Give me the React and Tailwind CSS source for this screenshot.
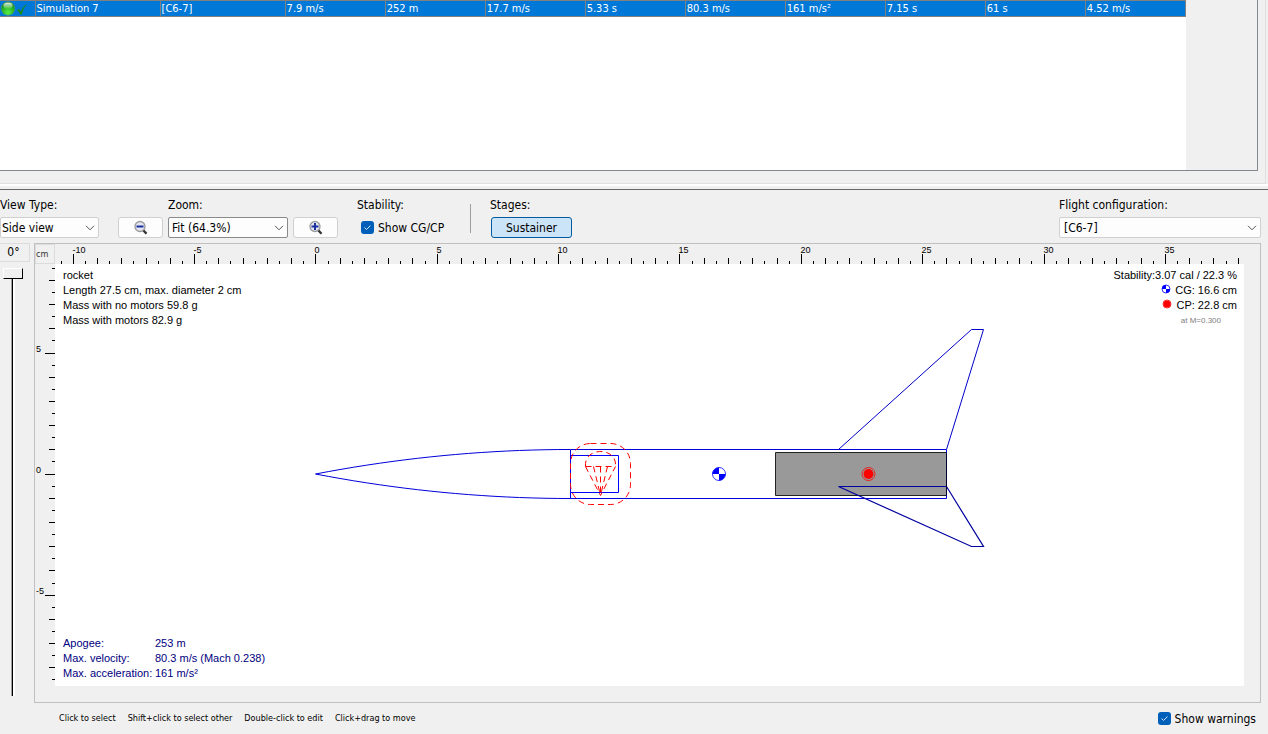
const SIM_CELLS = ['7.9 m/s', '252 m', '17.7 m/s', '5.33 s', '80.3 m/s', '161 m/s²', '7.15 s', '61 s', '4.52 m/s']

const HINTS = ['Click to select', 'Shift+click to select other', 'Double-click to edit', 'Click+drag to move']

// half-centimetre steps on the rulers
const H_STEP = 12.135
const V_STEP = 12.11
const H_TICKS = Array.from({ length: 98 }, (_, k) => k - 21)
const V_TICKS = Array.from({ length: 35 }, (_, k) => k - 17)

const tickLength = i => (i % 10 === 0 ? 10 : i % 2 === 0 ? 6 : 3)

// nose cone profile, sampled from tip to shoulder
const NOSE = Array.from({ length: 21 }, (_, k) => {
  const t = k / 20
  return { x: t * 255, r: 24.5 * (1 - (1 - t) ** 2) }
})
const nosePath = side => 'M' + NOSE.map(p => `${p.x} ${-0.5 + side * p.r}`).join('L')

function SimulationTable() {
  return (
    <div className="pr-0.5">
      <div className="border-r border-b border-[#e0e0e0] pr-[7px] pb-3">
        <div className="h-[171px] overflow-hidden border-r border-b border-[#828790] bg-[#f0f0f0]">
          <div className="h-full w-[1186px] bg-white">
            <table className="w-full table-fixed border-collapse text-[11px] leading-[15px] text-white">
              <tbody>
                <tr className="bg-[#0078d7]">
                  <td className="h-4 w-[35px] border border-l-0 border-[#808080] p-0">
                    <StatusIcons />
                  </td>
                  <td className="w-[125px] border border-[#808080] p-0 pl-px">Simulation 7</td>
                  <td className="w-[125px] border border-[#808080] p-0 pl-px">[C6-7]</td>
                  {SIM_CELLS.map(cell => (
                    <td key={cell} className="w-[100px] border border-[#808080] p-0 pl-px">
                      {cell}
                    </td>
                  ))}
                </tr>
              </tbody>
            </table>
          </div>
        </div>
      </div>
    </div>
  )
}

function StatusIcons() {
  return (
    <svg width="30" height="15" viewBox="0 0 30 15" className="block">
      <defs>
        <radialGradient id="ball" cx="0.5" cy="0.8" r="0.8">
          <stop offset="0" stopColor="#5bf04a" />
          <stop offset="0.6" stopColor="#22b022" />
          <stop offset="1" stopColor="#0a6a14" />
        </radialGradient>
        <linearGradient id="shine" x2="0" y2="1">
          <stop offset="0" stopColor="#fff" stopOpacity="0.9" />
          <stop offset="1" stopColor="#fff" stopOpacity="0.1" />
        </linearGradient>
      </defs>
      <circle cx="8" cy="7.5" r="6.8" fill="url(#ball)" stroke="#5a9a70" strokeWidth="0.6" />
      <ellipse cx="8" cy="4.6" rx="4.6" ry="3.2" fill="url(#shine)" />
      <path d="M17 9l2.200-1 1.600 2.600c1.200-3 3-5.600 6.200-7.600-2.600 3-4.200 6.400-5.200 10.600h-1.600c-.8-1.900-1.700-3.300-3.200-4.600z" fill="#1a8a1a" />
    </svg>
  )
}

function Magnifier({ plus }) {
  return (
    <svg width="16" height="16" viewBox="0 0 16 16">
      <circle cx="7" cy="6.5" r="5" fill="#e4e6f2" stroke="#9a9a9a" strokeWidth="1.3" />
      <path d="M10.500 10.500l3 3.200" stroke="#333" strokeWidth="2.400" />
      <path d="M3.500 6.500h7" stroke="#1a2fa0" strokeWidth="2" />
      {plus && <path d="M7 3v7" stroke="#1a2fa0" strokeWidth="2" />}
    </svg>
  )
}

function Dropdown({ id, value, width, border = 'border-[#d0d0d0]', pad = 'pl-[3px]' }) {
  return (
    <div className={`relative ${width}`}>
      <select
        id={id}
        defaultValue={value}
        className={`block h-[21px] w-full appearance-none rounded-[2px] border bg-[#fdfdfd] text-[12px] leading-[18px] ${border} ${pad}`}
      >
        <option>{value}</option>
      </select>
      <svg width="10" height="6" viewBox="0 0 10 6" className="pointer-events-none absolute top-2 right-1">
        <path d="M1 .8l4 4 4-4" fill="none" stroke="#555" />
      </svg>
    </div>
  )
}

function Check({ id, label }) {
  return (
    <label htmlFor={id} className="flex items-center gap-1">
      <span className="relative block size-[13px]">
        <input id={id} type="checkbox" defaultChecked className="block size-[13px] appearance-none rounded-[3px] bg-[#005fb8]" />
        <svg width="13" height="13" viewBox="0 0 13 13" className="pointer-events-none absolute inset-0">
          <path d="M3.500 6.500l2 2 4-4" fill="none" stroke="#d6e6f5" />
        </svg>
      </span>
      {label}
    </label>
  )
}

const ICON_BUTTON = 'flex h-[21px] w-[45px] items-center justify-center rounded-[3px] border border-[#d0d0d0] bg-[#fdfdfd]'

function Toolbar() {
  return (
    <div className="flex h-[54px] items-start border-t border-[#696969] pt-[7px] pr-[7px] text-[12px] leading-4">
      <div className="flex w-[99px] flex-col gap-1">
        <label htmlFor="view">View Type:</label>
        <Dropdown id="view" value="Side view" width="w-[99px]" pad="pl-px" />
      </div>
      <button aria-label="Zoom out" className={`${ICON_BUTTON} mt-5 ml-[19px]`}>
        <Magnifier />
      </button>
      <div className="ml-[5px] flex flex-col gap-1">
        <label htmlFor="zoom">Zoom:</label>
        <Dropdown id="zoom" value="Fit (64.3%)" width="w-[120px]" border="border-[#8a8a8a]" />
      </div>
      <button aria-label="Zoom in" className={`${ICON_BUTTON} mt-5 ml-[5px]`}>
        <Magnifier plus />
      </button>
      <div className="ml-[19px] flex w-[113px] flex-col gap-1">
        <span>Stability:</span>
        <div className="flex h-[21px] items-center pl-1">
          <Check id="cgcp" label="Show CG/CP" />
        </div>
      </div>
      <div className="mt-[7px] h-[29px] w-px bg-[#a0a0a0]" />
      <div className="ml-[19px] flex flex-col gap-1">
        <span>Stages:</span>
        <button className="ml-px h-[21px] w-[81px] rounded-[3px] border border-[#005a9e] bg-[#cce4f7]">Sustainer</button>
      </div>
      <div className="ml-auto flex flex-col gap-1">
        <label htmlFor="config">Flight configuration:</label>
        <Dropdown id="config" value="[C6-7]" width="w-[202px]" pad="pl-1" />
      </div>
    </div>
  )
}

function RotationSlider() {
  return (
    <div className="flex w-[30px] flex-col">
      <label htmlFor="rotation" className="h-[19px] border border-l-0 border-[#dcdcdc] pr-0.5 text-center text-[12px] leading-[17px]">
        0°
      </label>
      <input
        id="rotation"
        type="range"
        min="0"
        max="360"
        defaultValue="0"
        className="mt-[6px] mb-[7px] ml-[3px] w-5 flex-1 appearance-none bg-transparent [writing-mode:vertical-lr] [&::-webkit-slider-runnable-track]:h-full [&::-webkit-slider-runnable-track]:w-1 [&::-webkit-slider-runnable-track]:border-r-2 [&::-webkit-slider-runnable-track]:border-l [&::-webkit-slider-runnable-track]:border-r-white [&::-webkit-slider-runnable-track]:border-l-[#a0a0a0] [&::-webkit-slider-runnable-track]:bg-black [&::-webkit-slider-thumb]:-ml-[9px] [&::-webkit-slider-thumb]:h-[11px] [&::-webkit-slider-thumb]:w-5 [&::-webkit-slider-thumb]:appearance-none [&::-webkit-slider-thumb]:border [&::-webkit-slider-thumb]:border-t-white [&::-webkit-slider-thumb]:border-r-black [&::-webkit-slider-thumb]:border-b-black [&::-webkit-slider-thumb]:border-l-white [&::-webkit-slider-thumb]:bg-[#f0f0f0]"
      />
    </div>
  )
}

function HorizontalRuler() {
  return (
    <svg className="h-5 w-full overflow-hidden font-['Liberation_Sans',sans-serif] text-[9px]">
      {H_TICKS.map(i => {
        const x = Math.floor(260.9 + i * H_STEP) + 0.5
        return (
          <g key={i}>
            <path d={`M${x} 20v${-tickLength(i)}`} stroke="#000" />
            {i % 10 === 0 && <text x={x - 1} y="9">{i / 2}</text>}
          </g>
        )
      })}
    </svg>
  )
}

function VerticalRuler() {
  return (
    <svg className="h-auto w-5 overflow-hidden font-['Liberation_Sans',sans-serif] text-[9px]">
      {V_TICKS.map(i => {
        const y = Math.floor(210.1 - i * V_STEP) + 0.5
        return (
          <g key={i}>
            <path d={`M20 ${y}h${-tickLength(i)}`} stroke="#000" />
            {i % 10 === 0 && <text x="1" y={y - 2}>{i / 2}</text>}
          </g>
        )
      })}
    </svg>
  )
}

function CgMark({ r }) {
  return (
    <g stroke="none">
      <circle r={r} fill="#fff" stroke="#00f" strokeWidth="0.8" />
      <path d={`M0 0H${-r}A${r} ${r} 0 0 1 0 ${-r}zM0 0H${r}A${r} ${r} 0 0 1 0 ${r}z`} fill="#00f" />
    </g>
  )
}

function CpMark({ r, dot }) {
  return (
    <g>
      <circle r={r} fill="none" stroke="#f00" strokeWidth="0.8" />
      <circle r={dot} fill="#f00" stroke="none" />
    </g>
  )
}

function Rocket() {
  return (
    <svg className="absolute inset-0 size-full">
      <g transform="translate(260.5 210.5)" fill="none" stroke="#00f">
        <path d="M460 -22H631V21H460z" fill="#999" stroke="#222" />
        <path d={nosePath(1)} stroke="#0000dc" />
        <path d={nosePath(-1)} stroke="#0000dc" />
        <path d="M255 -25H631V24H255z" stroke="#0000dc" />
        <path d="M255 -19H303V18H255z" />
        <path d="M523 -25L656 -145H668L631 -25" stroke="#0000c8" />
        <path d="M523 12H631L668 72H656z" stroke="#0000a0" strokeWidth="1.2" />
        <path d="M631 -22V21" stroke="#000030" />
        <g stroke="#f00" strokeDasharray="6 4">
          <rect x="255" y="-31" width="60" height="61" rx="20" />
          <path d="M270 -8H300" />
          <path d="M270 -8C268 -28 302 -28 300 -8" />
          <path d="M270 -8L285 21L300 -8" />
          <path d="M278 -8L285 21M285 -8V21M292 -8L285 21" />
        </g>
        <g transform="translate(403.500 -.5)">
          <CgMark r={6.5} />
        </g>
        <g transform="translate(553 -.5)">
          <CpMark r={6.5} dot={5} />
        </g>
      </g>
    </svg>
  )
}

function DesignCanvas() {
  return (
    <div className="relative flex flex-1 flex-col justify-between bg-white pt-1 pr-[7px] pb-[5px] pl-2 font-['Liberation_Sans',sans-serif] text-[11px] leading-[15px]">
      <Rocket />
      <div className="relative flex justify-between">
        <div>
          <p>rocket</p>
          <p>Length 27.5 cm, max. diameter 2 cm</p>
          <p>Mass with no motors 59.8 g</p>
          <p>Mass with motors 82.9 g</p>
        </div>
        <div className="flex flex-col items-end">
          <p>Stability:3.07 cal / 22.3 %</p>
          <p className="flex gap-1">
            <svg width="10" height="12" viewBox="-5 -6 10 12"><CgMark r={4} /></svg>
            CG: 16.6 cm
          </p>
          <p className="flex gap-1">
            <svg width="10" height="12" viewBox="-5 -6 10 12"><CpMark r={4} dot={3.6} /></svg>
            CP: 22.8 cm
          </p>
          <p className="pr-4 text-[8px] text-[#808080]">at M=0.300</p>
        </div>
      </div>
      <dl className="relative grid grid-cols-[92px_auto] justify-start text-[#000080]">
        <dt>Apogee:</dt>
        <dd>253 m</dd>
        <dt>Max. velocity:</dt>
        <dd>80.3 m/s (Mach 0.238)</dd>
        <dt className="whitespace-nowrap">Max. acceleration:</dt>
        <dd>161 m/s²</dd>
      </dl>
    </div>
  )
}

export default function App() {
  return (
    <div className="flex min-h-screen flex-col overflow-hidden bg-[#f0f0f0] font-['DejaVu_Sans_Condensed','DejaVu_Sans',sans-serif] text-black">
      <SimulationTable />
      <div className="border-t-2 border-white pb-[3px]" />
      <Toolbar />
      <main className="flex flex-1 pr-[7px]">
        <RotationSlider />
        <section className="ml-1 flex flex-1 flex-col border border-[#c0c0c0] pr-4 pb-4">
          <div className="flex">
            <div className="h-5 w-5 shrink-0 border border-[#dcdcdc] text-[9px] leading-[19px] text-[#333]">cm</div>
            <HorizontalRuler />
          </div>
          <div className="flex flex-1 items-stretch">
            <VerticalRuler />
            <DesignCanvas />
          </div>
        </section>
      </main>
      <footer className="flex h-[31px] items-center justify-between pr-3 pl-[59px]">
        <div className="flex gap-3 text-[9px]">
          {HINTS.map(hint => (
            <span key={hint}>{hint}</span>
          ))}
        </div>
        <div className="text-[12px]">
          <Check id="warnings" label="Show warnings" />
        </div>
      </footer>
    </div>
  )
}
